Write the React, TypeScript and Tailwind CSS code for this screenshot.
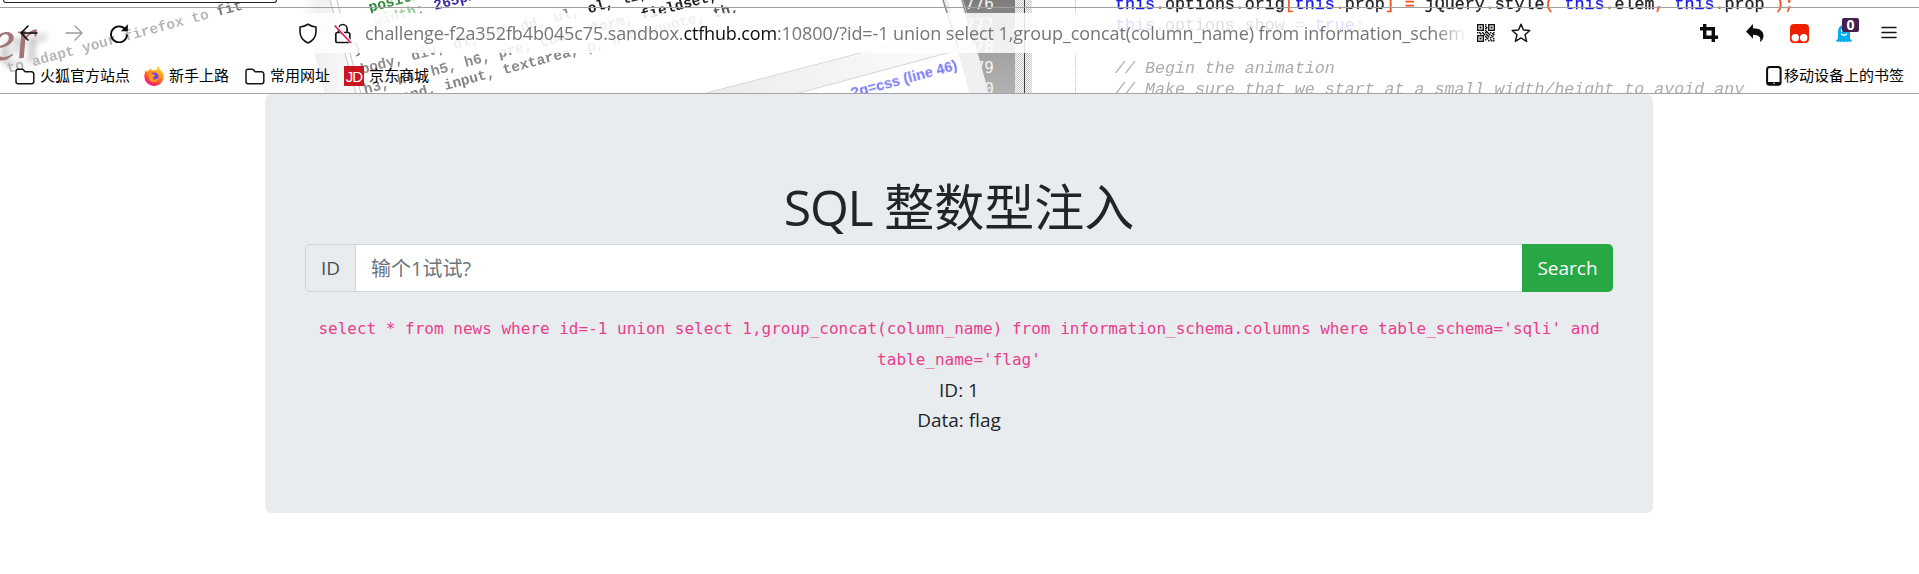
import React from 'react';

const MONO = 'Liberation Mono, monospace';

function ThemeArt() {
  return (
    <svg className="absolute inset-0 h-[94px] w-[1919px]" viewBox="0 0 1919 94" aria-hidden="true" xmlSpace="preserve">
      <defs>
        <linearGradient id="gutter" x1="0" y1="0" x2="0" y2="1">
          <stop offset="0" stopColor="#7c7c7c" />
          <stop offset="0.5" stopColor="#a0a0a0" />
          <stop offset="1" stopColor="#b2b2b2" />
        </linearGradient>
        <linearGradient id="edge" x1="0" y1="0" x2="1" y2="0">
          <stop offset="0" stopColor="#ffffff" />
          <stop offset="0.35" stopColor="#f0f0f0" />
          <stop offset="1" stopColor="#fafafa" />
        </linearGradient>
        <linearGradient id="panel" x1="0" y1="0" x2="1" y2="0">
          <stop offset="0" stopColor="#ebebeb" />
          <stop offset="0.6" stopColor="#f6f6f6" />
          <stop offset="1" stopColor="#fcfcfc" />
        </linearGradient>
        <pattern id="dots" width="2" height="2" patternUnits="userSpaceOnUse">
          <rect width="2" height="2" fill="#fafafa" />
          <rect width="1" height="1" fill="#c9c9c9" />
          <rect x="1" y="1" width="1" height="1" fill="#c9c9c9" />
        </pattern>
        <filter id="soft" x="-20%" y="-20%" width="150%" height="160%">
          <feGaussianBlur stdDeviation="3" />
        </filter>
        <filter id="slight">
          <feGaussianBlur stdDeviation="0.45" />
        </filter>
      </defs>

      <g fontFamily="Liberation Serif, serif" fontStyle="italic" fontSize="58">
        <text x="0" y="67" fill="#777" opacity="0.55" filter="url(#soft)" transform="rotate(-8 0 58)">er</text>
        <text x="-9" y="60" fill="#a27676" transform="rotate(-5 0 58)">er</text>
      </g>
      <g filter="url(#slight)" fontFamily={MONO} fontSize="14.5" fontWeight="700">
        <text transform="translate(8 73) rotate(-15.2)" fill="#bab5b5">
          to adapt your firefox to <tspan fill="#7d7979">fit</tspan>
        </text>
      </g>

      <polygon points="300,0 330,0 355,94 325,94" fill="url(#edge)" />
      <path d="M330 0 L345 53 L356 94 M337 0 L350 53 L361 94" stroke="#cdcdcd" strokeWidth="1.2" fill="none" />
      <g filter="url(#slight)" fontFamily={MONO} fontSize="14.5" fontWeight="700">
        <text transform="translate(370 12) rotate(-15)" fill="#2f8a3b">position</text>
        <text transform="translate(375 26) rotate(-15)" fill="#9ccd9c">width<tspan fill="#999">:</tspan></text>
        <text transform="translate(435 10) rotate(-15)" fill="#3a2fa8">265px</text>
        <text transform="translate(354 54) rotate(-15)" fill="#888">{'}'}</text>
        <text transform="translate(362 74) rotate(-15)" fill="#918c8c">
          body, div, dl, dt, dd, ul, <tspan fill="#222">ol, li,</tspan>
        </text>
        <text transform="translate(365 94) rotate(-15)" fill="#918c8c">
          h3, h4, h5, h6, pre, code, form, <tspan fill="#222">fieldset,</tspan>
        </text>
        <text transform="translate(378 108) rotate(-15)" fill="#8a8585">
          legend, input, textarea, <tspan fill="#999">p, blockquote, </tspan><tspan fill="#555">th,</tspan>
        </text>
      </g>

      <polygon points="962,0 1015,0 1015,94 988,94" fill="url(#gutter)" />
      <g fontFamily="DejaVu Sans Mono, monospace" fontSize="16" fill="#f4f4f4" textAnchor="end">
        <text x="994" y="9">776</text>
        <text x="994" y="30">777</text>
        <text x="994" y="52">778</text>
        <text x="994" y="73">779</text>
        <text x="994" y="94">780</text>
      </g>
      <polygon points="702,94 958,30 973,47 795,94" fill="url(#panel)" />
      <polygon points="943,0 963,0 989,94 970,94" fill="#f0f0f0" />
      <polygon points="948,0 960,0 972,46 961,49" fill="#fdfdfd" />
      <path d="M943 0 L958 47" stroke="#8b8b8b" strokeWidth="1.5" />
      <path d="M962 0 L974 44" stroke="#777" strokeWidth="1" />
      <path d="M702 94 L958 28 M795 94 L973 46" stroke="#d5d5d5" strokeWidth="1" fill="none" />
      <text transform="translate(852 98) rotate(-15)" fontFamily="Liberation Sans, sans-serif" fontWeight="700" fontSize="14.6" fill="#7676f2" filter="url(#slight)">
        ?g=css (line 46)
      </text>

      <rect x="1015" y="0" width="17" height="94" fill="url(#dots)" />
      <rect x="1024" y="0" width="1" height="94" fill="#3c3c3c" />
      <path d="M1075.5 0 V94" stroke="#bdbdbd" strokeDasharray="1 1" />

      <g fontFamily={MONO} fontSize="16.65" filter="url(#slight)">
        <text x="1115" y="9" fill="#222" stroke="#222" strokeWidth="0.3">
          <tspan fill="#1d1de8" stroke="#1d1de8">this</tspan><tspan fill="#f4511e" stroke="none">.</tspan>options<tspan fill="#f4511e" stroke="none">.</tspan>orig<tspan fill="#f4511e" stroke="#f4511e">[</tspan><tspan fill="#1d1de8" stroke="#1d1de8">this</tspan><tspan fill="#f4511e" stroke="none">.</tspan>prop<tspan fill="#f4511e" stroke="#f4511e">]</tspan> <tspan fill="#f4511e" stroke="#f4511e">=</tspan> jQuery<tspan fill="#f4511e" stroke="none">.</tspan>style<tspan fill="#f4511e" stroke="#f4511e">(</tspan> <tspan fill="#1d1de8" stroke="#1d1de8">this</tspan><tspan fill="#f4511e" stroke="none">.</tspan>elem<tspan fill="#f4511e" stroke="#f4511e">,</tspan> <tspan fill="#1d1de8" stroke="#1d1de8">this</tspan><tspan fill="#f4511e" stroke="none">.</tspan>prop <tspan fill="#f4511e" stroke="#f4511e">);</tspan>
        </text>
        <text x="1115" y="30" fill="#333">
          <tspan fill="#1d1de8">this</tspan><tspan fill="#f4511e">.</tspan>options<tspan fill="#f4511e">.</tspan>show <tspan fill="#f4511e">=</tspan> <tspan fill="#1d1de8">true</tspan><tspan fill="#f4511e">;</tspan>
        </text>
        <g fill="#acacac" fontStyle="italic">
          <text x="1115" y="73">// Begin the animation</text>
          <text x="1115" y="94">// Make sure that we start at a small width/height to avoid any</text>
        </g>
      </g>
    </svg>
  );
}

const Folder = () => (
  <svg className="h-[17px] w-[20px] shrink-0" viewBox="0 0 20 17" fill="none" stroke="#15141a" strokeWidth="1.5">
    <path d="M1 3.2a2 2 0 0 1 2-2h4.2c.6 0 1 .3 1.4.7l1.1 1.3c.3.4.8.6 1.3.6h5.6a2.2 2.2 0 0 1 2.2 2.2v7.5a2.2 2.2 0 0 1-2.2 2.2H3a2 2 0 0 1-2-2z" />
  </svg>
);

const Firefox = () => (
  <svg className="h-5 w-5 shrink-0" viewBox="0 0 20 20">
    <defs>
      <linearGradient id="fx" x1="0.8" y1="0" x2="0.3" y2="1">
        <stop offset="0" stopColor="#ffe226" />
        <stop offset="0.45" stopColor="#ff8a1f" />
        <stop offset="0.75" stopColor="#ff3b47" />
        <stop offset="1" stopColor="#e31587" />
      </linearGradient>
    </defs>
    <path d="M1.8 4.2c.4.9 1 1.4 1.8 1.5C5 3.7 6 2.7 7.6 2.3c-.4.8-.4 1.6 0 2.2 1.4-.4 3.4-.8 5.3-.2-.4-1.6.2-3.3 1.7-4.1.1 1.9 1.3 2.7 2.5 4.2.9 1.1 1.2 1.8 1.3 2.6l.5-.7c1.1 2.2 1.2 5.5 0 8A9.700 9.700 0 0 1 10 20 9.500 9.500 0 0 1 .4 11.500C.2 9 .6 6.500 1.8 4.200z" fill="url(#fx)" />
    <circle cx="10" cy="11" r="4.6" fill="#7542e5" />
    <path d="M4.800 7.200c2-.7 3.500.3 4.700 1.200 1 .5 1.700.3 1.700.9 0 1-1.700 1.300-2.100 2.500-.3 1.200.9 2 2.300 1.700 1.600-.3 2.800-1.500 2.500-3.200 1.700 3-1 6.200-4.200 6-3.500-.2-6.100-3.500-4.900-9.100z" fill="#ff9a22" />
  </svg>
);

const JdLogo = () => (
  <span className="flex h-5 w-5 shrink-0 items-center justify-center bg-[#c81623] font-['Liberation_Sans',sans-serif] text-[15px] leading-none tracking-[-1px] text-white">JD</span>
);

function Bookmark({ icon, label, className }: { icon: React.ReactNode; label: string; className: string }) {
  return (
    <div className={`flex h-6 items-center gap-[5px] ${className}`}>
      {icon}
      <span className="-mt-[2px] whitespace-nowrap">{label}</span>
    </div>
  );
}

const qrCells = [
  [8, 0], [8, 2], [9, 3], [8, 4], [8, 6], [9, 7], [0, 8], [2, 8], [3, 9], [5, 8], [6, 9], [8, 8], [10, 8], [11, 9], [13, 8], [15, 9], [16, 8],
  [7, 10], [9, 10], [10, 11], [12, 10], [14, 11], [16, 10], [8, 12], [9, 13], [11, 12], [13, 13], [15, 12], [8, 15], [10, 14], [11, 16], [13, 15], [14, 16], [16, 14], [16, 16],
];

const Qr = () => (
  <svg className="h-[18px] w-[18px]" viewBox="0 0 18 18" fill="#15141a">
    <g fill="none" stroke="#15141a" strokeWidth="1.4">
      <rect x="0.7" y="0.7" width="5.6" height="5.6" />
      <rect x="11.7" y="0.7" width="5.6" height="5.6" />
      <rect x="0.7" y="11.7" width="5.6" height="5.6" />
    </g>
    <path d="M2.500 2.500h2v2h-2zM13.500 2.500h2v2h-2zM2.500 13.500h2v2h-2z" />
    {qrCells.map(([x, y]) => (
      <rect key={`${x}-${y}`} x={x} y={y} width="1.5" height="1.5" />
    ))}
  </svg>
);

function Toolbar() {
  return (
    <div className="mt-[12px] flex h-10 items-center">
      <svg className="ml-[20px] h-[18px] w-[18px]" viewBox="0 0 18 18" fill="none" stroke="#0c0c0d" strokeWidth="1.6" strokeLinecap="round" strokeLinejoin="round">
        <path d="M17 9H1.200M8 2 1 9l7 7" />
      </svg>
      <svg className="ml-[27px] h-[18px] w-[18px]" viewBox="0 0 18 18" fill="none" stroke="#9b9b9b" strokeWidth="1.4" strokeLinecap="round" strokeLinejoin="round">
        <path d="M1 9h15.800M10 2l7 7-7 7" />
      </svg>
      <svg className="ml-[26px] h-5 w-5" viewBox="0 0 20 20" fill="none" stroke="#0c0c0d" strokeWidth="1.9">
        <path d="M16.700 7A8 8 0 1 0 18 11.500" />
        <path d="M18.800 1.200v7h-7z" fill="#0c0c0d" stroke="none" />
      </svg>
      <div className="ml-[157px] flex h-10 w-[1263px] items-center bg-white/85">
        <svg className="ml-[13px] h-[21px] w-[18px]" viewBox="0 0 18 21" fill="none" stroke="#15141a" strokeWidth="1.6" strokeLinejoin="round">
          <path d="M9 1.200c2.500 1.500 5 2.400 8 2.800v4.500c0 5-3 9.200-8 11.500-5-2.300-8-6.500-8-11.500V4c3-.4 5.500-1.300 8-2.800z" />
        </svg>
        <svg className="ml-[17px] h-[21px] w-[18px]" viewBox="0 0 18 21" fill="none">
          <rect x="1.8" y="9.5" width="14" height="10" rx="1.8" stroke="#15141a" strokeWidth="1.7" />
          <path d="M4.500 9.500V5.800a4.300 4.300 0 0 1 8.600 0v3.700" stroke="#15141a" strokeWidth="1.7" />
          <path d="M1.500 2.200 17.500 20" stroke="#fff" strokeWidth="3" />
          <path d="M.7 2.500 17 20" stroke="#e8174b" strokeWidth="1.7" />
        </svg>
        <div className="ml-[13px] w-[1100px] overflow-hidden whitespace-nowrap [mask-image:linear-gradient(to_right,#000_1070px,transparent_1102px)] font-['Open_Sans',sans-serif] text-[18px] leading-[26px] text-[#767676]">
          <span className="tracking-[-0.12px]">challenge-f2a352fb4b045c75.sandbox.</span>
          <span className="tracking-[-0.15px] text-[#0c0c0d]">ctfhub.com</span>
          <span className="tracking-[-0.07px]">:10800/?id=-1 union select 1,group_concat(column_name) from information_schema</span>
        </div>
        <div className="ml-[12px] flex items-center gap-[16px]">
          <Qr />
          <svg className="h-5 w-5" viewBox="0 0 20 20" fill="none" stroke="#15141a" strokeWidth="1.5" strokeLinejoin="round">
            <path d="m10 1.200 2.500 5.800 6.300.5-4.800 4.200 1.600 6.700-5.600-3.500-5.600 3.500L6 11.700 1.200 7.500 7.500 7z" />
          </svg>
        </div>
      </div>
      <svg className="ml-[151px] h-[18px] w-[18px]" viewBox="0 0 18 18" fill="none" stroke="#0c0c0d" strokeWidth="3.4">
        <path d="M4.700 0v13.300H18M0 4.700h13.300V18" />
      </svg>
      <svg className="ml-[28px] h-[18px] w-[18px]" viewBox="0 0 18 18" fill="#0c0c0d">
        <path d="M7 0v4.200c6.500 0 10.500 2.700 10.500 7.500 0 2.700-1.500 5-3.500 6.300 1-3.500.5-7-7-7.200v4L0 7.500z" />
      </svg>
      <svg className="ml-[26px] h-[19px] w-[19px]" viewBox="0 0 19 19">
        <rect width="19" height="19" rx="4" fill="#ee2000" />
        <circle cx="5.3" cy="13.7" r="3.7" fill="#fff" />
        <circle cx="13.7" cy="13.7" r="3.7" fill="#fff" />
      </svg>
      <div className="relative ml-[27px] h-[19px] w-[16px]">
        <svg className="h-[19px] w-[16px]" viewBox="0 0 16 19">
          <path d="M8 1c4 0 6 3 6 7v6.500l2 2.500c-.8 1.200-2.300 1-3 .2-1 1.200-2.300 1.200-3.200.1-1 1.100-2.500 1.100-3.500 0-1 1-2.200 1-3.200-.1-.8.9-2.300.9-3.100-.2l2-2.500V8c0-4 2-7 6-7z" fill="#00aef0" />
          <path d="M5 9.500c1 2.300 5 2.300 6 0" fill="none" stroke="#fff" strokeWidth="1.3" />
          <circle cx="6" cy="6.500" r="1.2" fill="#fff" />
        </svg>
        <span className="absolute left-[6px] top-[-6px] flex h-[14px] w-[17px] items-center justify-center rounded-[2px] bg-[#45204f] font-['Open_Sans',sans-serif] text-[14px] font-bold leading-none text-white">0</span>
      </div>
      <svg className="ml-[29px] h-[14px] w-[16px]" viewBox="0 0 16 14" stroke="#15141a" strokeWidth="1.5" strokeLinecap="round">
        <path d="M1 1.500h14M1 6.500h14M1 11.500h14" />
      </svg>
    </div>
  );
}

function Chrome() {
  return (
    <header className="relative h-[94px] overflow-hidden border-b border-[#a5a5a5] bg-white font-['Open_Sans','Noto_Sans_CJK_SC',sans-serif]">
      <ThemeArt />
      <div className="relative flex h-full flex-col">
        <div className="h-[8px] shrink-0 border-b border-[#a0a0a0] pl-[3px]">
          <div className="h-[3px] w-[274px] rounded-b-[4px] border-x border-b border-[#222] bg-white" />
        </div>
        <div className="-mt-[7px]">
          <Toolbar />
        </div>
        <nav className="mt-[11px] flex items-center text-[15px] leading-6 text-black">
          <Bookmark className="ml-[15px] w-[114px]" icon={<Folder />} label="火狐官方站点" />
          <Bookmark className="ml-[15px] w-[86px]" icon={<Firefox />} label="新手上路" />
          <Bookmark className="ml-[15px] w-[84px]" icon={<Folder />} label="常用网址" />
          <Bookmark className="ml-[15px] w-[85px]" icon={<JdLogo />} label="京东商城" />
          <div className="ml-auto mr-[15px] flex items-center gap-[2px]">
            <svg className="h-5 w-4" viewBox="0 0 16 20">
              <rect x="1.1" y="1" width="13.5" height="17.8" rx="2.5" fill="#fff" stroke="#0c0c0d" strokeWidth="2" />
              <path d="M1 16h14v2.500H1z" fill="#0c0c0d" />
              <circle cx="8" cy="17.3" r="0.8" fill="#fff" />
            </svg>
            <span className="-mt-[2px]">移动设备上的书签</span>
          </div>
        </nav>
      </div>
    </header>
  );
}

export default function App() {
  return (
    <div className="h-[574px] overflow-hidden bg-white">
      <Chrome />
      <main className="ml-[265px] h-[419px] w-[1388px] rounded-[7px] bg-[#e9ecef] px-[40px] pt-[80px] font-['Open_Sans','Noto_Sans_CJK_SC',sans-serif] text-[#212529]">
        <h1 className="flex h-[60px] items-center justify-center pt-[5px] text-[50px] leading-[60px]">
          <span className="whitespace-pre text-[50px] tracking-[-1.2px]">SQL </span>
          <span>整数型注入</span>
        </h1>
        <form className="mt-[10px] flex h-[48px] text-[19px]" onSubmit={(e) => e.preventDefault()}>
          <span className="flex w-[51px] items-center justify-center rounded-l-[5px] border border-[#ced4da] pt-px text-[#495057]">ID</span>
          <input
            className="min-w-0 flex-1 border-y border-[#ced4da] bg-white px-[15px] pt-[2px] text-[20px] outline-none placeholder:text-[#6c757d] placeholder:opacity-100"
            placeholder="输个1试试?"
          />
          <button className="w-[91px] rounded-r-[5px] bg-[#28a745] pt-px text-white">Search</button>
        </form>
        <div className="mt-[21px] text-center text-[19px] leading-[30px]">
          <code className="block font-['DejaVu_Sans_Mono',monospace] text-[16px] leading-[31px] text-[#e83e8c]">
            select * from news where id=-1 union select 1,group_concat(column_name) from information_schema.columns where table_schema='sqli' and table_name='flag'
          </code>
          <p>ID: 1</p>
          <p>Data: flag</p>
        </div>
      </main>
    </div>
  );
}
